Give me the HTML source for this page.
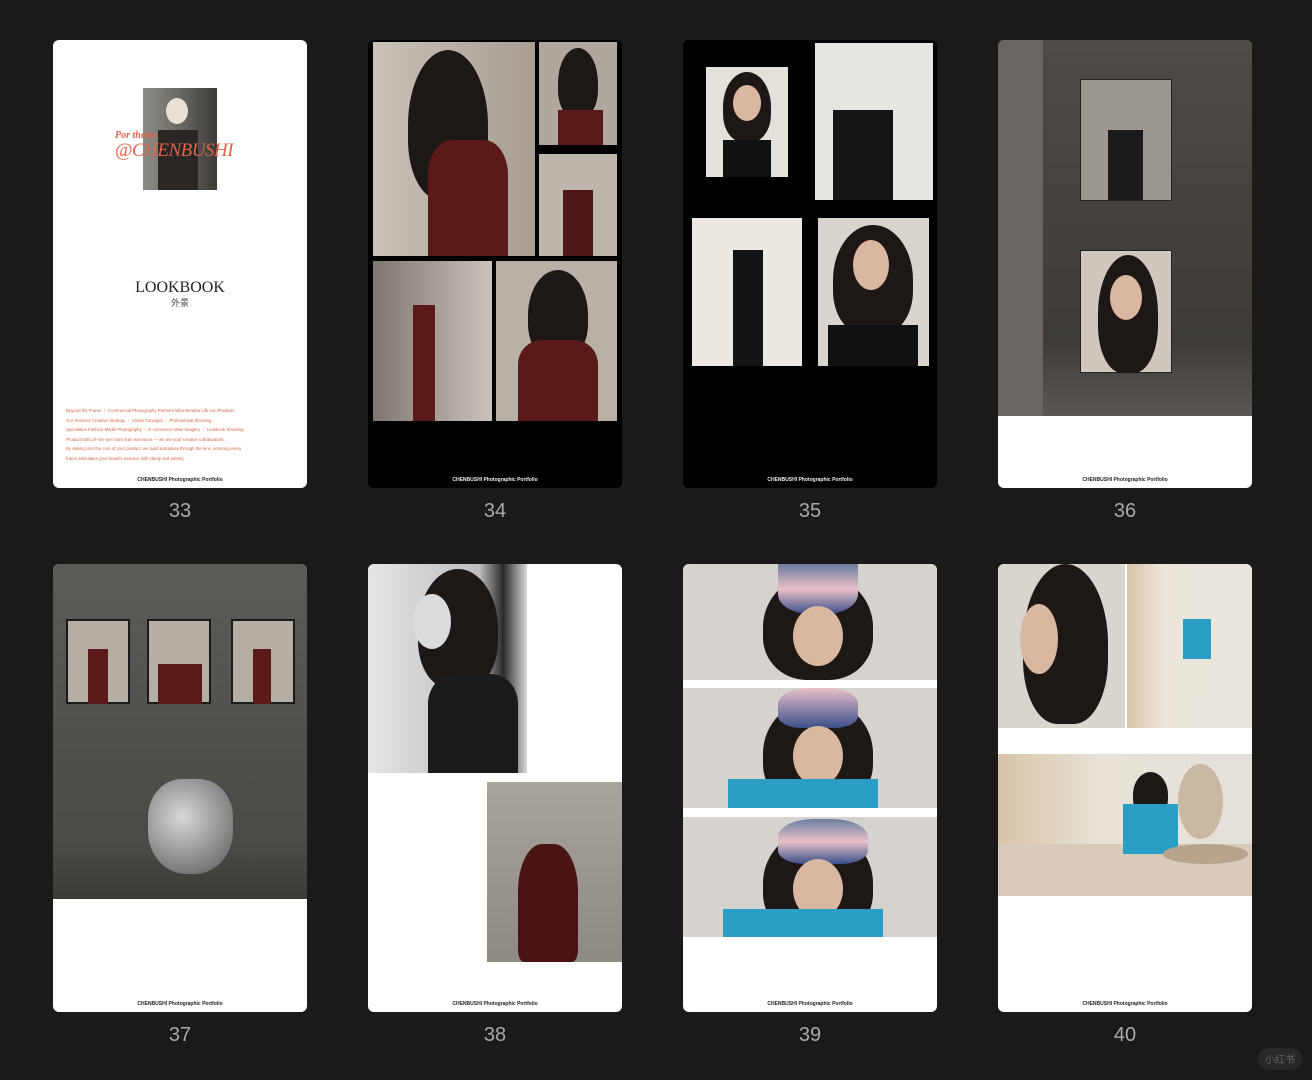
<!DOCTYPE html>
<html><head><meta charset="utf-8"><style>
*{margin:0;padding:0;box-sizing:border-box}
body{width:1312px;height:1080px;background:#1c1a19;position:relative;overflow:hidden;font-family:"Liberation Sans",sans-serif}
.c{position:absolute;width:254px;height:448px;border-radius:6px;overflow:hidden;background:#fff}
.lb{position:absolute;width:254px;text-align:center;color:#a9a9a9;font-size:20px}
.p{position:absolute}
.f{position:absolute;left:0;width:254px;text-align:center;font-size:5px;font-weight:bold;color:#222;top:437px}
.hair{position:absolute;background:#1d1816;border-radius:50% 50% 40% 40%}
.face{position:absolute;background:#d9b7a0;border-radius:50%}
</style></head><body>

<!-- 33 -->
<div class="c" style="left:53px;top:40px">
 <div class="p" style="left:90px;top:48px;width:74px;height:102px;background:linear-gradient(90deg,#8d8c86,#6a6862 50%,#3c3a37)"></div>
 <div class="face" style="left:113px;top:58px;width:22px;height:26px;background:#e8e0d4"></div>
 <div class="p" style="left:105px;top:90px;width:40px;height:60px;background:#2a2624"></div>
 <div class="p" style="left:62px;top:90px;color:#e0644a;font:italic bold 10px 'Liberation Serif',serif">Por theme</div>
 <div class="p" style="left:62px;top:100px;color:#e0644a;font:italic 19px 'Liberation Serif',serif;letter-spacing:-0.5px">@CHENBUSHI</div>
 <div class="p" style="left:0;width:254px;top:239px;text-align:center;font:16px 'Liberation Serif',serif;color:#222">LOOKBOOK</div>
 <div class="p" style="left:0;width:254px;top:256px;text-align:center;font:9px 'Noto Sans CJK SC',sans-serif;color:#444">外景</div>
 <div class="p" style="left:13px;top:366px;width:232px;font-size:4.3px;line-height:9.5px;color:#d2653f">Beyond the Frame ｜ Commercial Photography Partners Who Breathe Life into Products<br>Our Services Creative Strategy ｜ Visual Concepts ｜ Professional Shooting<br>Specialties Fashion Model Photography ｜ E-commerce Main Imagery ｜ Lookbook Shooting<br><span style="line-height:7px">Product Still Life We are more than executors — we are your creative collaborators.<br>By delving into the core of your product, we build narratives through the lens, ensuring every<br>frame articulates your brand's essence with clarity and artistry.</span></div>
 <div class="f">CHENBUSHI Photographic Portfolio</div>
</div>
<div class="lb" style="left:53px;top:500px">33</div>

<!-- 34 -->
<div class="c" style="left:368px;top:40px;background:#000">
 <div class="p" style="left:5px;top:2px;width:162px;height:214px;background:linear-gradient(90deg,#c9c2b8,#a89e93)"></div>
 <div class="hair" style="left:40px;top:10px;width:80px;height:150px"></div>
 <div class="p" style="left:60px;top:100px;width:80px;height:116px;background:#5a1a1a;border-radius:30% 30% 0 0"></div>
 <div class="p" style="left:171px;top:2px;width:78px;height:103px;background:#b0a89e"></div>
 <div class="hair" style="left:190px;top:8px;width:40px;height:70px"></div>
 <div class="p" style="left:190px;top:70px;width:45px;height:35px;background:#5a1a1a"></div>
 <div class="p" style="left:171px;top:114px;width:78px;height:102px;background:#bdb6ac"></div>
 <div class="p" style="left:195px;top:150px;width:30px;height:66px;background:#4e1616"></div>
 <div class="p" style="left:5px;top:221px;width:119px;height:160px;background:linear-gradient(90deg,#7d7770,#c9c3bb)"></div>
 <div class="p" style="left:45px;top:265px;width:22px;height:116px;background:#5a1a1a"></div>
 <div class="p" style="left:128px;top:221px;width:121px;height:160px;background:#b8b1a7"></div>
 <div class="hair" style="left:160px;top:230px;width:60px;height:90px"></div>
 <div class="p" style="left:150px;top:300px;width:80px;height:81px;background:#5a1a1a;border-radius:30% 30% 0 0"></div>
 <div class="f" style="color:#eee">CHENBUSHI Photographic Portfolio</div>
</div>
<div class="lb" style="left:368px;top:500px">34</div>

<!-- 35 -->
<div class="c" style="left:683px;top:40px;background:#000">
 <div class="p" style="left:23px;top:27px;width:82px;height:110px;background:#e4e0da"></div>
 <div class="hair" style="left:40px;top:32px;width:48px;height:70px"></div>
 <div class="face" style="left:50px;top:45px;width:28px;height:36px"></div>
 <div class="p" style="left:40px;top:100px;width:48px;height:37px;background:#111"></div>
 <div class="p" style="left:132px;top:3px;width:118px;height:157px;background:#e8e6e2"></div>
 <div class="p" style="left:150px;top:70px;width:60px;height:90px;background:#151515"></div>
 <div class="p" style="left:9px;top:178px;width:110px;height:148px;background:#ece8e2"></div>
 <div class="p" style="left:50px;top:210px;width:30px;height:116px;background:#141414"></div>
 <div class="p" style="left:135px;top:178px;width:111px;height:148px;background:#d8d4ce"></div>
 <div class="hair" style="left:150px;top:185px;width:80px;height:110px"></div>
 <div class="face" style="left:170px;top:200px;width:36px;height:50px"></div>
 <div class="p" style="left:145px;top:285px;width:90px;height:41px;background:#111"></div>
 <div class="f" style="color:#eee">CHENBUSHI Photographic Portfolio</div>
</div>
<div class="lb" style="left:683px;top:500px">35</div>

<!-- 36 -->
<div class="c" style="left:998px;top:40px">
 <div class="p" style="left:0;top:0;width:254px;height:376px;background:linear-gradient(180deg,#4e4a46,#3e3b38 80%,#5a5755)"></div>
 <div class="p" style="left:0;top:0;width:45px;height:376px;background:#6a6560"></div>
 <div class="p" style="left:82px;top:39px;width:92px;height:122px;background:#9c9790;border:1px solid #222"></div>
 <div class="p" style="left:110px;top:90px;width:35px;height:70px;background:#1a1a1a"></div>
 <div class="p" style="left:82px;top:210px;width:92px;height:123px;background:#cfc8be;border:1px solid #222"></div>
 <div class="hair" style="left:100px;top:215px;width:60px;height:118px"></div>
 <div class="face" style="left:112px;top:235px;width:32px;height:45px"></div>
 <div class="f">CHENBUSHI Photographic Portfolio</div>
</div>
<div class="lb" style="left:998px;top:500px">36</div>

<!-- 37 -->
<div class="c" style="left:53px;top:564px">
 <div class="p" style="left:0;top:0;width:254px;height:335px;background:linear-gradient(180deg,#5c5b58,#4a4946 85%,#3a3a37)"></div>
 <div class="p" style="left:13px;top:55px;width:64px;height:85px;background:#b5aea5;border:2px solid #1a1a1a"></div>
 <div class="p" style="left:35px;top:85px;width:20px;height:55px;background:#5a1a1a"></div>
 <div class="p" style="left:94px;top:55px;width:64px;height:85px;background:#b5aea5;border:2px solid #1a1a1a"></div>
 <div class="p" style="left:105px;top:100px;width:44px;height:40px;background:#5a1a1a"></div>
 <div class="p" style="left:178px;top:55px;width:64px;height:85px;background:#b5aea5;border:2px solid #1a1a1a"></div>
 <div class="p" style="left:200px;top:85px;width:18px;height:55px;background:#5a1a1a"></div>
 <div class="p" style="left:95px;top:215px;width:85px;height:95px;background:radial-gradient(circle at 40% 40%,#d8d8d8,#8a8a8a 60%,#555);border-radius:40% 40% 45% 45%"></div>
 <div class="f">CHENBUSHI Photographic Portfolio</div>
</div>
<div class="lb" style="left:53px;top:1024px">37</div>

<!-- 38 -->
<div class="c" style="left:368px;top:564px">
 <div class="p" style="left:0;top:0;width:159px;height:209px;background:linear-gradient(90deg,#e6e6e6,#bdbdbd 70%,#2a2a2a 85%,#d8d8d8)"></div>
 <div class="hair" style="left:50px;top:5px;width:80px;height:120px"></div>
 <div class="face" style="left:45px;top:30px;width:38px;height:55px;background:#dcdcdc"></div>
 <div class="p" style="left:60px;top:110px;width:90px;height:99px;background:#1a1a1a;border-radius:30% 30% 0 0"></div>
 <div class="p" style="left:119px;top:218px;width:135px;height:180px;background:linear-gradient(180deg,#a9a49d,#8d8983)"></div>
 <div class="p" style="left:150px;top:280px;width:60px;height:118px;background:#4a1414;border-radius:40% 40% 10% 10%"></div>
 <div class="f">CHENBUSHI Photographic Portfolio</div>
</div>
<div class="lb" style="left:368px;top:1024px">38</div>

<!-- 39 -->
<div class="c" style="left:683px;top:564px">
 <div class="p" style="left:0;top:0;width:254px;height:116px;background:#d6d3cf"></div>
 <div class="p" style="left:0;top:124px;width:254px;height:120px;background:#d6d3cf"></div>
 <div class="p" style="left:0;top:253px;width:254px;height:120px;background:#d6d3cf"></div>
 <div class="hair" style="left:80px;top:10px;width:110px;height:106px"></div>
 <div class="p" style="left:95px;top:0;width:80px;height:50px;background:linear-gradient(180deg,#6a7fa0,#e8c0c8,#3a4f8a);border-radius:0 0 40% 40%"></div>
 <div class="face" style="left:110px;top:42px;width:50px;height:60px"></div>
 <div class="hair" style="left:80px;top:135px;width:110px;height:109px"></div>
 <div class="p" style="left:95px;top:124px;width:80px;height:40px;background:linear-gradient(180deg,#e8c0c8,#3a4f8a);border-radius:40% 40% 30% 30%"></div>
 <div class="face" style="left:110px;top:162px;width:50px;height:60px"></div>
 <div class="p" style="left:45px;top:215px;width:150px;height:29px;background:#2a9ec4"></div>
 <div class="hair" style="left:80px;top:265px;width:110px;height:108px"></div>
 <div class="p" style="left:95px;top:255px;width:90px;height:45px;background:linear-gradient(180deg,#6a7fa0,#e8c0c8,#3a4f8a);border-radius:40% 40% 30% 30%"></div>
 <div class="face" style="left:110px;top:295px;width:50px;height:60px"></div>
 <div class="p" style="left:40px;top:345px;width:160px;height:28px;background:#2a9ec4"></div>
 <div class="f">CHENBUSHI Photographic Portfolio</div>
</div>
<div class="lb" style="left:683px;top:1024px">39</div>

<!-- 40 -->
<div class="c" style="left:998px;top:564px">
 <div class="p" style="left:0;top:0;width:127px;height:164px;background:#d9d6d0"></div>
 <div class="hair" style="left:25px;top:0;width:85px;height:160px"></div>
 <div class="face" style="left:22px;top:40px;width:38px;height:70px"></div>
 <div class="p" style="left:129px;top:0;width:125px;height:164px;background:linear-gradient(90deg,#d8c4a8,#ece6dc 30%,#e8e4de)"></div>
 <div class="p" style="left:185px;top:55px;width:28px;height:40px;background:#2a9ec4"></div>
 <div class="p" style="left:188px;top:95px;width:22px;height:40px;background:#ebe6dc"></div>
 <div class="p" style="left:0;top:190px;width:254px;height:142px;background:linear-gradient(90deg,#d8c4a8,#e8e2d8 40%,#e4e0da)"></div>
 <div class="p" style="left:0;top:280px;width:254px;height:52px;background:#d8cbbb"></div>
 <div class="hair" style="left:135px;top:208px;width:35px;height:45px"></div>
 <div class="p" style="left:125px;top:240px;width:55px;height:50px;background:#2a9ec4"></div>
 <div class="p" style="left:180px;top:200px;width:45px;height:75px;background:#c9b9a2;border-radius:50%"></div>
 <div class="p" style="left:165px;top:280px;width:85px;height:20px;background:#b8a48c;border-radius:50%"></div>
 <div class="f">CHENBUSHI Photographic Portfolio</div>
</div>
<div class="lb" style="left:998px;top:1024px">40</div>

<div class="p" style="left:1258px;top:1048px;width:44px;height:22px;border-radius:11px;background:#2a2827;color:#666;font:10px 'Noto Sans CJK SC',sans-serif;text-align:center;line-height:22px">小红书</div>
</body></html>
